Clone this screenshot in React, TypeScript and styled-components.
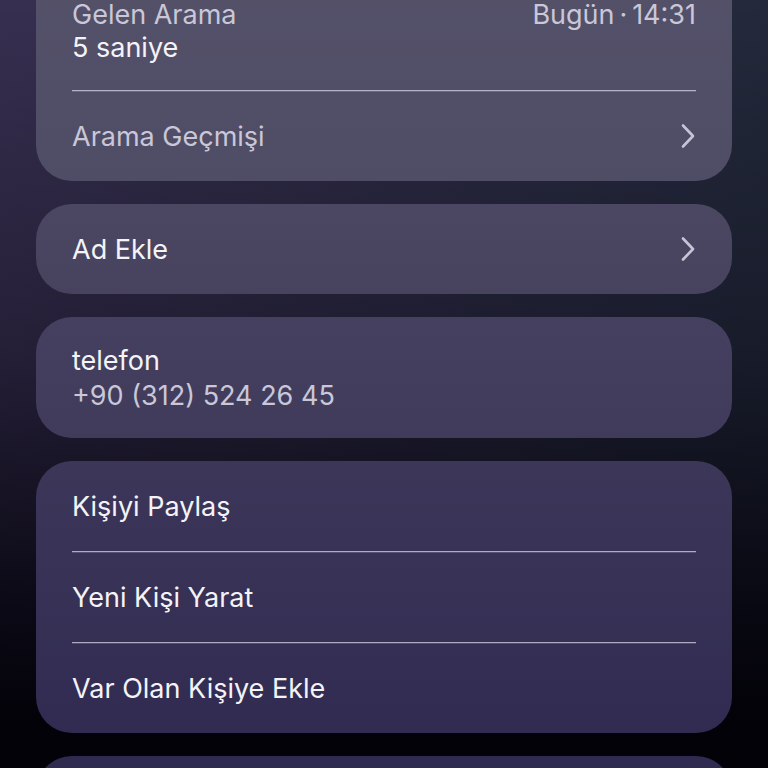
import { createGlobalStyle, styled } from 'styled-components';

const GlobalStyle = createGlobalStyle`
  html, body {
    margin: 0;
    padding: 0;
    background: #050409;
  }
  body {
    font-family: Inter, "Noto Sans", "Liberation Sans", sans-serif;
    -webkit-font-smoothing: antialiased;
  }
`;

const Screen = styled.div`
  width: 768px;
  height: 768px;
  overflow: hidden;
  background:
    linear-gradient(180deg, rgba(0, 0, 0, 0) 0%, rgba(3, 2, 10, 0.35) 45%, rgba(3, 2, 10, 0.85) 80%, #030208 94%),
    linear-gradient(90deg, #372f50 0%, #2d2b45 50%, #23293b 100%);
`;

const Stack = styled.div`
  display: flex;
  flex-direction: column;
  gap: 23px;
  padding: 0 36px;
  margin-top: -40px;
`;

const Card = styled.section<{ $from: string; $to: string }>`
  background: linear-gradient(180deg, ${(p) => p.$from}, ${(p) => p.$to});
  border-radius: 36px;
  padding: 0 36px;
  color: #f4f3f8;
  font-size: 27px;
`;

const CallInfo = styled.div`
  display: flex;
  justify-content: space-between;
  padding: 38px 0 26px;
  line-height: 33px;
`;

const Muted = styled.div`
  color: #c9c7d8;
`;

const Primary = styled.div`
  color: #f4f3f8;
`;

const Row = styled.div<{ $muted?: boolean }>`
  display: flex;
  align-items: center;
  justify-content: space-between;
  height: 90px;
  color: ${(p) => (p.$muted ? '#c9c7d8' : '#f4f3f8')};
`;

const Divider = styled.div`
  height: 1px;
  background: rgba(225, 222, 240, 0.7);
  box-shadow: 0 1px 0 rgba(225, 222, 240, 0.18);
`;

const FieldBlock = styled.div`
  padding: 26px 0 25px;
  line-height: 35px;
`;

const Chevron = () => (
  <svg width="16" height="26" viewBox="0 0 16 26" fill="none">
    <path d="M3 2.5 L13 13 L3 23.5" stroke="#c6c4d6" strokeWidth="2.6" strokeLinecap="round" strokeLinejoin="round" />
  </svg>
);

const Spacer = styled.div`
  height: 90px;
`;

export default function App() {
  return (
    <>
      <GlobalStyle />
      <Screen>
        <Stack>
          <Card $from="#545269" $to="#4f4c66">
            <CallInfo>
              <div>
                <Muted>Gelen Arama</Muted>
                <Primary>5 saniye</Primary>
              </div>
              <Muted>Bugün{'\u2009·\u2009'}14:31</Muted>
            </CallInfo>
            <Divider />
            <Row $muted>
              <span>Arama Geçmişi</span>
              <Chevron />
            </Row>
          </Card>
          <Card $from="#4b4763" $to="#47435f">
            <Row>
              <span>Ad Ekle</span>
              <Chevron />
            </Row>
          </Card>
          <Card $from="#45405f" $to="#403b5b">
            <FieldBlock>
              <Primary>telefon</Primary>
              <Muted>+90 (312) 524 26 45</Muted>
            </FieldBlock>
          </Card>
          <Card $from="#3c3759" $to="#312b52">
            <Row>Kişiyi Paylaş</Row>
            <Divider />
            <Row>Yeni Kişi Yarat</Row>
            <Divider />
            <Row>Var Olan Kişiye Ekle</Row>
          </Card>
          <Card $from="#2f2a50" $to="#2e294e">
            <Spacer />
          </Card>
        </Stack>
      </Screen>
    </>
  );
}
